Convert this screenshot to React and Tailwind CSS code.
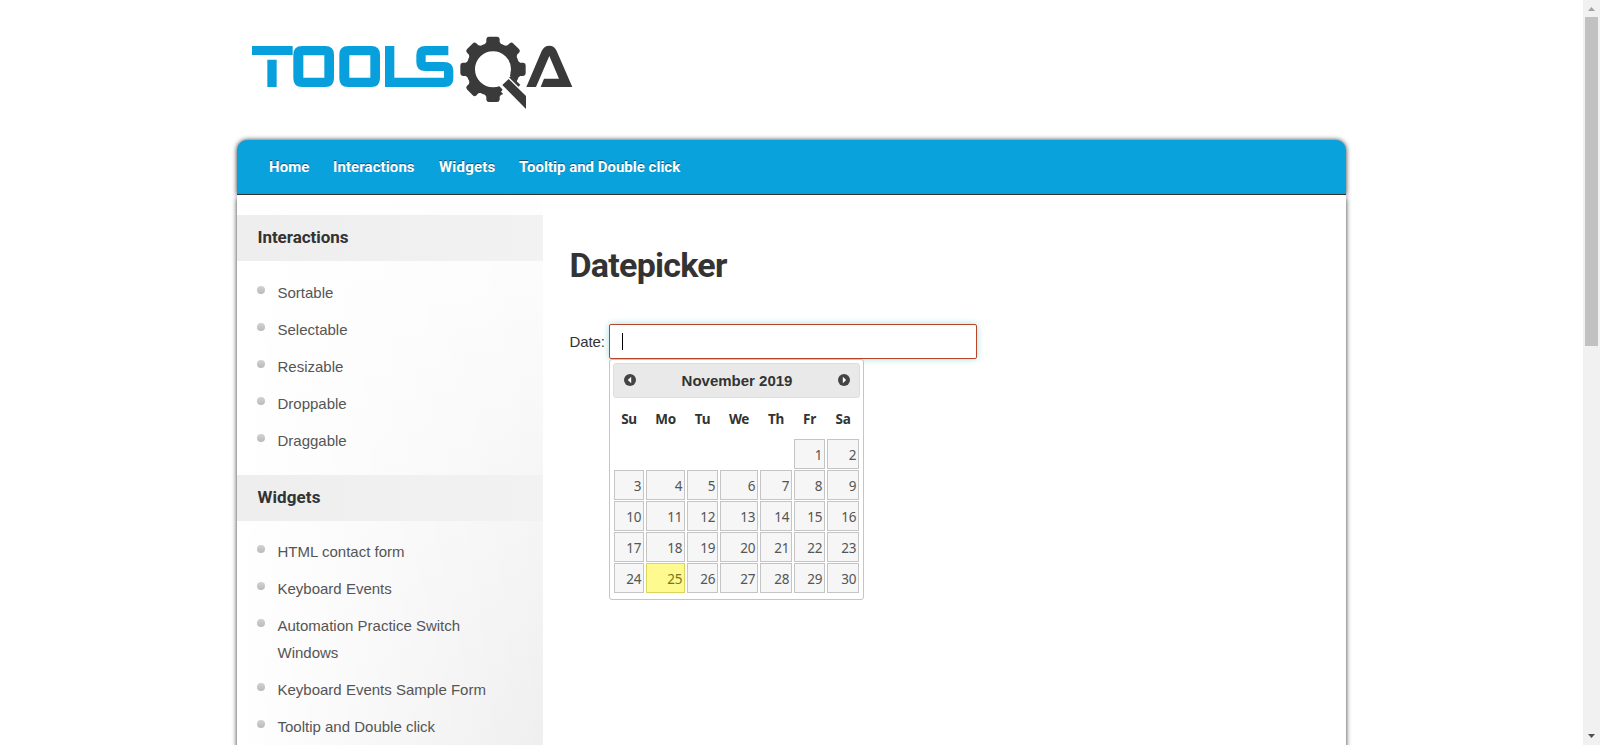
const head = 'font-["Roboto",sans-serif] font-bold';

const interactions = ["Sortable", "Selectable", "Resizable", "Droppable", "Draggable"];
const widgets = [
  "HTML contact form",
  "Keyboard Events",
  "Automation Practice Switch Windows",
  "Keyboard Events Sample Form",
  "Tooltip and Double click",
];
const nav = [
  ["Home", "w-[64px] tracking-[0.1px]"],
  ["Interactions", "w-[106px] tracking-[0.08px]"],
  ["Widgets", "w-[80px] tracking-[0.2px]"],
  ["Tooltip and Double click", "tracking-[0px]"],
];
const days = Array.from({ length: 30 }, (_, i) => i + 1);
const cols = "grid grid-cols-[30px_39px_31px_38px_32px_31px_32px] gap-x-[2px]";

function Logo() {
  return (
    <svg width="345" height="95" viewBox="0 0 1035 285" fill="none">
      <g fill="#07a0dd">
        <path d="M36 63H158V90H36zM82 104H110V186H82z" />
        <path fillRule="evenodd" d="M186 63H256Q282 63 282 89V160Q282 186 256 186H186Q160 186 160 160V89Q160 63 186 63zM190 91V158H253V91z" />
        <path fillRule="evenodd" d="M324 63H394Q420 63 420 89V160Q420 186 394 186H324Q298 186 298 160V89Q298 63 324 63zM328 91V158H391V91z" />
        <path d="M435 63H463V158H612V138H556Q529 138 529 112V90Q529 63 556 63H625V91H557V111H612Q640 111 640 138V160Q640 186 613 186H435z" />
      </g>
      <g fill="#3a3a3a">
        <g transform="translate(759 133)">
          {[0, 45, 90, 135, 180, 225, 270, 315].map((a) => (
            <path key={a} transform={`rotate(${a})`} d="M-28 -70L-20 -82V-91Q-19 -98 -12 -98H12Q19 -98 20 -91V-82L28 -70z" />
          ))}
          <circle r="67" stroke="#3a3a3a" strokeWidth="26" fill="none" />
        </g>
        <path fill="#fff" d="M775 181L808 150L836 176L867 206V265L835 255L783 200L789 193z" />
        <path d="M804 160L813 153L841 179L834 187z" />
        <path fill="#fff" d="M779 184L806 156L846 196L836 250z" />
        <path d="M787 180L806 162L858 213V252z" />
        <path d="M859 186L905 78Q913 62 928 62Q943 62 950 78L997 186H902L912 161H957L928 93L888 186z" />
      </g>
    </svg>
  );
}

function List({ items }) {
  return (
    <ul className="flex flex-col gap-[10px] pl-5 pr-10 text-[15px] leading-[27px] text-[#555]">
      {items.map((t) => (
        <li key={t} className="flex items-start gap-[12.5px]">
          <span className="mt-[7px] h-2 w-2 shrink-0 rounded-full bg-linear-to-b from-[#d2d2d2] to-[#bababa]" />
          <span>{t}</span>
        </li>
      ))}
    </ul>
  );
}

function Arrow({ left }) {
  return (
    <svg width="12" height="12" viewBox="0 0 12 12" className={left ? "mb-[2px] rotate-180" : "mb-[2px]"}>
      <circle cx="6" cy="6" r="6" fill="#444" />
      <path d="M4.8 2.8V9.2L8.2 6z" fill="#fff" />
    </svg>
  );
}

function Calendar() {
  return (
    <div className='absolute left-0 top-[35px] h-[241px] w-[255px] rounded-[3px] border border-[#c5c5c5] bg-white p-[3px] font-["Noto_Sans",sans-serif]'>
      <div className="flex h-[35px] items-center justify-between rounded-[3px] border border-[#ddd] bg-[#e9e9e9] pl-[10px] pr-[9px]">
        <Arrow left />
        <span className='pt-px font-["Liberation_Sans",sans-serif] text-[15px] font-bold text-[#333]'>November 2019</span>
        <Arrow />
      </div>
      <div className={`${cols} ml-px h-[41px] items-center pt-px text-center text-[13.5px] font-bold tracking-[-0.3px] text-[#333]`}>
        {["Su", "Mo", "Tu", "We", "Th", "Fr", "Sa"].map((d) => <span key={d}>{d}</span>)}
      </div>
      <div className={`${cols} ml-px gap-y-px text-right text-[13.5px] leading-[30px] tracking-[-0.4px]`}>
        <span className="col-span-5" />
        {days.map((d) => (
          <span
            key={d}
            className={`h-[30px] border pr-[2px] ${d === 25 ? "border-[#dad55e] bg-[#fffa90] text-[#777620]" : "border-[#c5c5c5] bg-[#f6f6f6] text-[#555]"}`}
          >
            {d}
          </span>
        ))}
      </div>
    </div>
  );
}

export default function App() {
  return (
    <div className='flex h-[745px] w-[1600px] overflow-hidden bg-white font-["Liberation_Sans",Arial,sans-serif] text-[#333]'>
      <div className="flex w-[1583px] flex-col pl-[237px]">
        <header className="h-[140px] shrink-0 pl-[3px] pt-[25px]"><Logo /></header>
        <nav className={`${head} flex h-[55px] w-[1109px] shrink-0 items-center rounded-t-[10px] border-b border-[#333] bg-[#0aa2dd] pl-8 pt-px text-[15px] text-white shadow-[0_0_5px_#333] [text-shadow:0_-1px_0_#18506b]`}>
          {nav.map(([t, c]) => <a key={t} className={c}>{t}</a>)}
        </nav>
        <div className="flex h-[620px] w-[1109px] shrink-0 shadow-[0_3px_5px_#333]">
          <aside className="relative w-[306px] shrink-0 bg-[linear-gradient(90deg,#fff,#ffffff00),linear-gradient(180deg,#fefefe,#ededed)] pt-5">
            <h2 className={`${head} mb-[18px] flex h-[46px] items-center bg-linear-to-r from-[#eee] to-[#f2f2f2] pb-px pl-[20.5px] text-[17px] tracking-[-0.05px]`}>Interactions</h2>
            <List items={interactions} />
            <h2 className={`${head} mb-[17px] mt-[11px] flex h-[46px] items-center bg-linear-to-r from-[#eee] to-[#f2f2f2] pb-px pl-[20.5px] text-[17px] tracking-[0.1px] [ul+&]:mt-[21px]`}>Widgets</h2>
            <List items={widgets} />
          </aside>
          <main className="relative z-20 flex-1 bg-white pl-[26.5px]">
            <h1 className={`${head} mt-[48px] h-[81px] text-[34px] leading-[44px] tracking-[-0.75px]`}>Datepicker</h1>
            <div className="flex items-center">
              <label className="w-[39.5px] pt-px text-[15px] tracking-[-0.1px]">Date:</label>
              <div className="relative flex h-[35px] w-[368px] items-center rounded-[2px] border border-[#b84626] bg-white pl-3 shadow-[0_0_7px_#a5d9e2]">
                <span className="h-[17px] w-px bg-black" />
                <div className="absolute -left-px -top-px"><Calendar /></div>
              </div>
            </div>
          </main>
        </div>
      </div>
      <div className="flex w-[17px] flex-col items-center justify-between bg-[#f1f1f1]">
        <div className="flex flex-col items-center">
          <svg width="17" height="17"><path d="M5 11L8.5 7L12 11z" fill="#a3a3a3" /></svg>
          <div className="h-[329px] w-[13px] bg-[#c1c1c1]" />
        </div>
        <svg width="17" height="17"><path d="M5 6H12L8.5 10z" fill="#505050" /></svg>
      </div>
    </div>
  );
}
